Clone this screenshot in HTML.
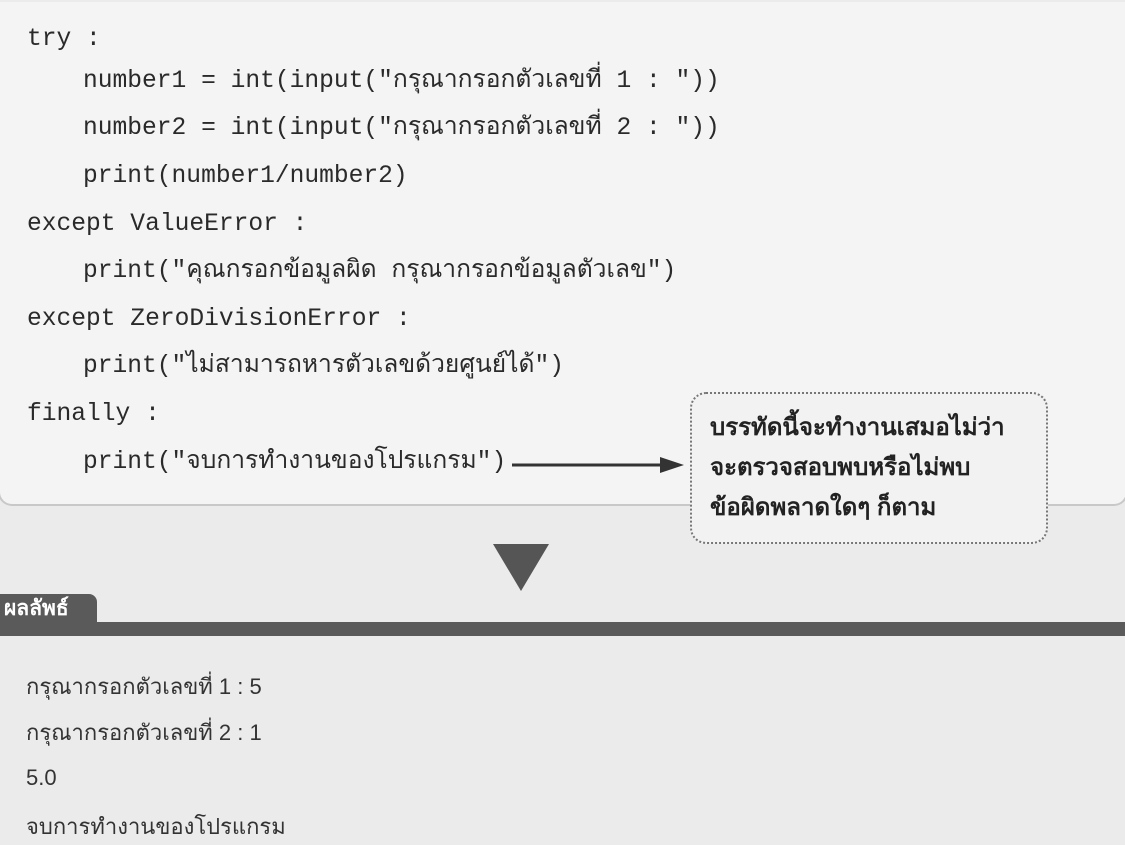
<!DOCTYPE html>
<html><head><meta charset="utf-8"><style>
body{margin:0;width:1125px;height:845px;overflow:hidden;background:#ebebeb;position:relative;font-family:"Liberation Sans",sans-serif;}
.box{position:absolute;left:-2px;top:2px;width:1126px;height:502px;background:#f4f4f4;border:2px solid #c8c8c8;border-top:none;border-radius:0 0 14px 14px;}
.code{position:absolute;font-family:"Liberation Mono","DejaVu Sans Mono",monospace;font-size:24.6px;color:#2a2a2a;white-space:pre;line-height:1;}
.note{position:absolute;left:690px;top:392px;width:358px;height:152px;border:2px dotted #777;border-radius:16px;background:#f2f2f2;box-sizing:border-box;padding:14px 0 0 18px;font-size:24px;font-weight:bold;line-height:40px;color:#222;white-space:nowrap;}
.out{position:absolute;left:26px;font-size:22px;color:#333;line-height:1;}
</style></head><body>
<div class="box"></div>
<div class="code" style="left:27px;top:28px">try :</div>
<div class="code" style="left:83px;top:70px">number1 = int(input("กรุณากรอกตัวเลขที่ 1 : "))</div>
<div class="code" style="left:83px;top:117px">number2 = int(input("กรุณากรอกตัวเลขที่ 2 : "))</div>
<div class="code" style="left:83px;top:165px">print(number1/number2)</div>
<div class="code" style="left:27px;top:213px">except ValueError :</div>
<div class="code" style="left:83px;top:260px">print("คุณกรอกข้อมูลผิด กรุณากรอกข้อมูลตัวเลข")</div>
<div class="code" style="left:27px;top:308px">except ZeroDivisionError :</div>
<div class="code" style="left:83px;top:355px">print("ไม่สามารถหารตัวเลขด้วยศูนย์ได้")</div>
<div class="code" style="left:27px;top:403px">finally :</div>
<div class="code" style="left:83px;top:451px">print("จบการทำงานของโปรแกรม")</div>
<svg style="position:absolute;left:512px;top:455px" width="175" height="20"><line x1="0" y1="10" x2="150" y2="10" stroke="#333" stroke-width="3"/><polygon points="148,2 172,10 148,18" fill="#333"/></svg>
<div class="note">บรรทัดนี้จะทำงานเสมอไม่ว่า<br>จะตรวจสอบพบหรือไม่พบ<br>ข้อผิดพลาดใดๆ ก็ตาม</div>
<svg style="position:absolute;left:493px;top:544px" width="58" height="48"><polygon points="0,0 56,0 28,47" fill="#555"/></svg>
<div style="position:absolute;left:0;top:594px;width:97px;height:32px;background:#5a5a5a;border-radius:0 8px 0 0;color:#fff;font-weight:bold;font-size:21px;padding-left:4px;box-sizing:border-box;line-height:30px">ผลลัพธ์</div>
<div style="position:absolute;left:0;top:622px;width:1125px;height:14px;background:#5a5a5a"></div>
<div class="out" style="top:676px">กรุณากรอกตัวเลขที่ 1 : 5</div>
<div class="out" style="top:722px">กรุณากรอกตัวเลขที่ 2 : 1</div>
<div class="out" style="top:767px">5.0</div>
<div class="out" style="top:816px">จบการทำงานของโปรแกรม</div>
</body></html>
